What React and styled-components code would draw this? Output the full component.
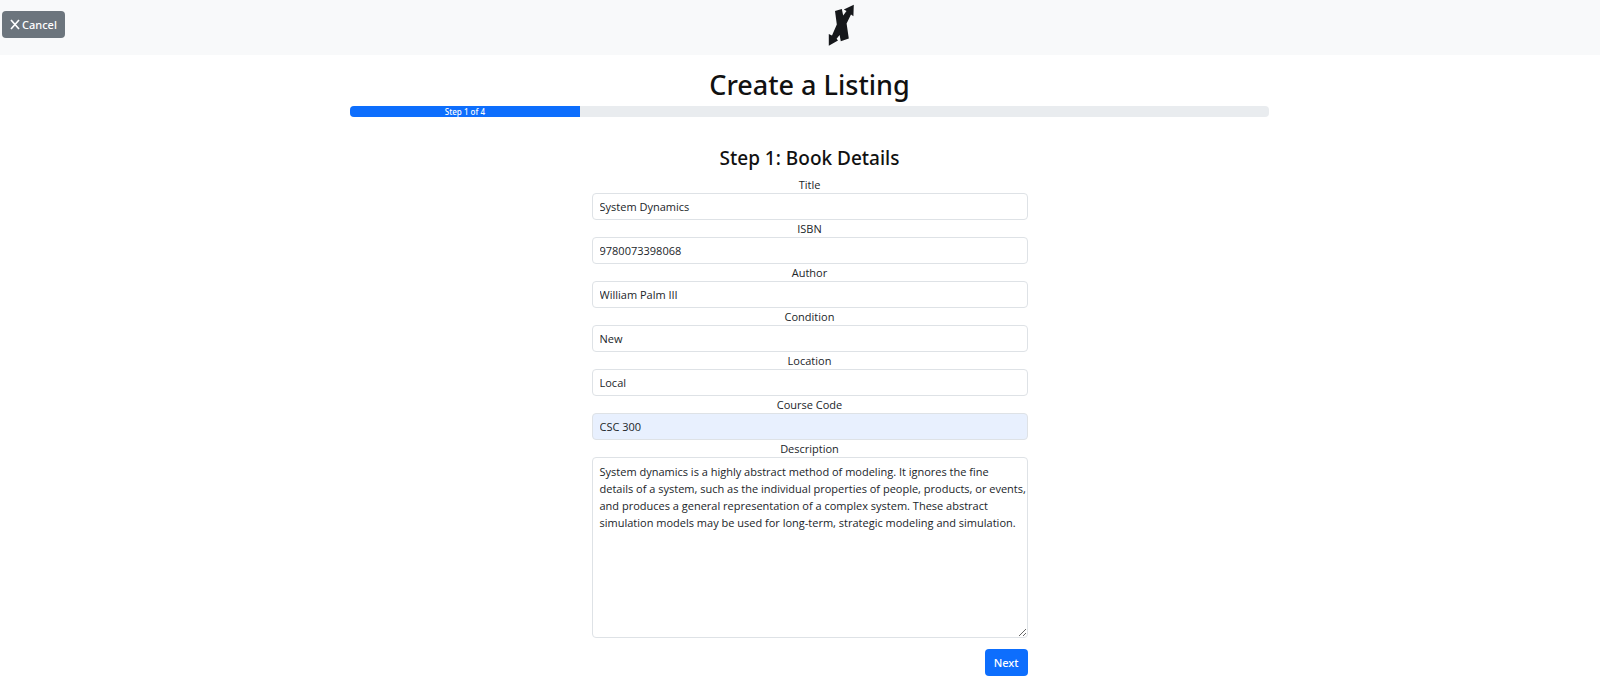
import React from "react";
import styled, { createGlobalStyle } from "styled-components";

const GlobalStyle = createGlobalStyle`
  *, *::before, *::after { box-sizing: border-box; }
  body {
    margin: 0;
    background: #fff;
    color: #212529;
    font: 400 11px/17px "Open Sans", "Noto Sans", sans-serif;
  }
`;

const Header = styled.header`
  display: flex;
  align-items: center;
  height: 55px;
  padding: 0 0 6px 2px;
  background: #f8f9fa;
`;

const LogoLink = styled.a`
  display: flex;
  flex: 1;
  justify-content: center;
  padding-left: 18px;
`;

const Button = styled.button`
  display: inline-flex;
  align-items: center;
  gap: 2px;
  height: 27px;
  padding: 0 ${(p) => (p.$variant === "primary" ? 9 : 8)}px;
  border: 0;
  border-radius: 4px;
  background: ${(p) => (p.$variant === "primary" ? "#0d6efd" : "#6c757d")};
  color: #fff;
  font: inherit;
  font-family: "Noto Sans", sans-serif;
  font-weight: 500;
  cursor: pointer;
`;

const Main = styled.main`
  display: flex;
  flex-direction: column;
  align-items: center;
  padding: 12px 0 20px 19px;
`;

const PageTitle = styled.h1`
  margin: 0;
  color: #111;
  font-family: "Noto Sans", sans-serif;
  font-size: 27px;
  font-weight: 500;
  line-height: 36px;
`;

const Progress = styled.div`
  display: flex;
  width: 60%;
  max-width: 919px;
  height: 11px;
  margin: 3px 0 28px;
  overflow: hidden;
  border-radius: 4px;
  background: #e9ecef;
`;

const ProgressBar = styled.div`
  background: #0d6efd;
  color: #fff;
  font-family: "Noto Sans", sans-serif;
  font-size: 8px;
  font-weight: 500;
  line-height: 11px;
  text-align: center;
`;

const Form = styled.form`
  display: flex;
  flex-direction: column;
  width: 436px;
  max-width: 100%;
`;

const StepTitle = styled.h2`
  margin: 0 0 4px;
  color: #111;
  font-family: "Noto Sans", sans-serif;
  font-size: 19px;
  font-weight: 500;
  line-height: 27px;
  text-align: center;
`;

const Label = styled.label`
  text-align: center;
`;

const Input = styled.input`
  height: 27px;
  padding: 0 7px;
  border: 1px solid #dee2e6;
  border-radius: 4px;
  background: ${(p) => (p.$autofilled ? "#e8f0fe" : "#fff")};
  color: inherit;
  font: inherit;
`;

const TextArea = styled.textarea`
  height: 181px;
  padding: 5px 0 5px 7px;
  overflow: hidden;
  border: 1px solid #dee2e6;
  border-radius: 4px;
  color: inherit;
  font: inherit;
  white-space: pre;
  resize: vertical;
`;

const Actions = styled.div`
  display: flex;
  justify-content: flex-end;
  margin-top: 11px;
`;

const fields = [
  { id: "title", label: "Title", value: "System Dynamics" },
  { id: "isbn", label: "ISBN", value: "9780073398068" },
  { id: "author", label: "Author", value: "William Palm III" },
  { id: "condition", label: "Condition", value: "New" },
  { id: "location", label: "Location", value: "Local" },
  { id: "course", label: "Course Code", value: "CSC 300", autofilled: true },
];

const description = `System dynamics is a highly abstract method of modeling. It ignores the fine
details of a system, such as the individual properties of people, products, or events,
and produces a general representation of a complex system. These abstract
simulation models may be used for long-term, strategic modeling and simulation.`;

const CloseIcon = () => (
  <svg width="10" height="11" viewBox="0 0 10 11" fill="none" stroke="currentColor" strokeWidth="1.7" aria-hidden="true">
    <path d="M1 1 L9 10 M9 1 L1 10" />
  </svg>
);

const Logo = () => (
  <svg width="26" height="42" viewBox="0 0 26 42" fill="#16181b" aria-hidden="true">
    <path d="M25.8 0.8 L15.8 5.5 L18.5 7 L15.2 11.5 L13.8 5 L7 7 L8.8 20.5 L4 31.5 L0.8 30 L0.8 41.7 L10 36.5 L8.6 34.8 L11.6 31 L12.8 37.2 L20.8 34.6 L18.6 19.5 L23 10.6 L25.4 12.2 Z" />
  </svg>
);

export default function App() {
  const step = 1;
  const steps = 4;
  return (
    <>
      <GlobalStyle />
      <Header>
        <Button type="button"><CloseIcon />Cancel</Button>
        <LogoLink href="#" aria-label="Home"><Logo /></LogoLink>
      </Header>
      <Main>
        <PageTitle>Create a Listing</PageTitle>
        <Progress role="progressbar" aria-label="Listing progress" aria-valuenow={step} aria-valuemin={0} aria-valuemax={steps}>
          <ProgressBar style={{ width: `${(step / steps) * 100}%` }}>Step {step} of {steps}</ProgressBar>
        </Progress>
        <Form>
          <StepTitle>Step 1: Book Details</StepTitle>
          {fields.map((f) => (
            <React.Fragment key={f.id}>
              <Label htmlFor={f.id}>{f.label}</Label>
              <Input id={f.id} defaultValue={f.value} $autofilled={f.autofilled} />
            </React.Fragment>
          ))}
          <Label htmlFor="description">Description</Label>
          <TextArea id="description" defaultValue={description} />
          <Actions>
            <Button type="button" $variant="primary">Next</Button>
          </Actions>
        </Form>
      </Main>
    </>
  );
}
